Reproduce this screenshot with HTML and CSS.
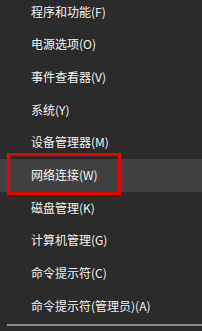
FILE: index.html
```html
<!DOCTYPE html>
<html lang="zh-CN">
<head>
    <meta charset="UTF-8">
    <title>Win+X 菜单</title>
    <link rel="stylesheet" href="styles.css">
</head>
<body>

<div class="menu">
    <div class="menu-item">程序和功能(F)</div>
    <div class="menu-item">电源选项(O)</div>
    <div class="menu-item">事件查看器(V)</div>
    <div class="menu-item">系统(Y)</div>
    <div class="menu-item">设备管理器(M)</div>
    <div class="menu-item active">
        网络连接(W)
        <span class="mark"></span>
    </div>
    <div class="menu-item">磁盘管理(K)</div>
    <div class="menu-item">计算机管理(G)</div>
    <div class="menu-item">命令提示符(C)</div>
    <div class="menu-item">命令提示符(管理员)(A)</div>
    <div class="separator"></div>
</div>

</body>
</html>
```

FILE: styles.css
```css
html, body {
    margin: 0;
    padding: 0;
    background-color: #2b2b2b;
    height: 100%;
    overflow: hidden;
}
.menu {
    margin-top: -4.3px;
    font-family: "Noto Sans CJK SC", "Noto Sans", sans-serif;
    font-size: 12px;
    color: #f2f2f2;
}
.menu-item {
    position: relative;
    height: 32.67px;
    line-height: 32.67px;
    padding-left: 31px;
    white-space: nowrap;
}
.menu-item.active {
    background-color: #414141;
}
.mark {
    position: absolute;
    left: 7px;
    top: -6px;
    width: 108px;
    height: 36px;
    border: 3px solid #f20000;
}
.separator {
    height: 2px;
    margin: 2px 0 0 7px;
    background-color: #8a8a8a;
}
```
